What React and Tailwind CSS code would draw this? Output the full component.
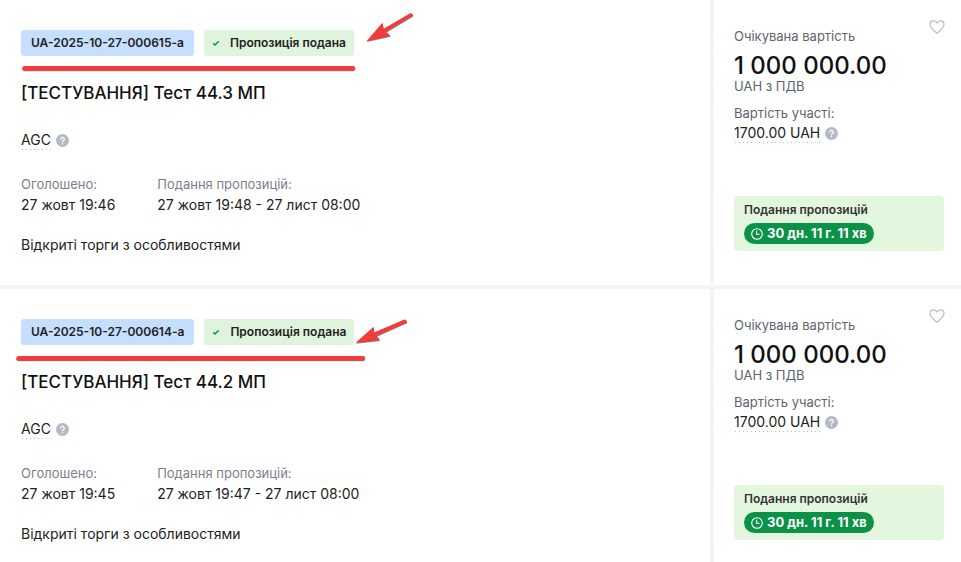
import { useState } from "react";

const tenders = [
  {
    id: "UA-2025-10-27-000615-a",
    title: "[ТЕСТУВАННЯ] Тест 44.3 МП",
    announced: "27 жовт 19:46",
    period: "27 жовт 19:48 - 27 лист 08:00",
    Mark: FirstMark,
  },
  {
    id: "UA-2025-10-27-000614-a",
    title: "[ТЕСТУВАННЯ] Тест 44.2 МП",
    announced: "27 жовт 19:45",
    period: "27 жовт 19:47 - 27 лист 08:00",
    Mark: SecondMark,
  },
];

// red pen notes drawn over the card
function FirstMark() {
  return (
    <svg className="absolute left-0 top-0 pointer-events-none" width="440" height="80" viewBox="0 0 440 80" fill="none" aria-hidden="true">
      <path d="M24.5 69.2H353" stroke="#8b7b7b" strokeWidth="4" strokeLinecap="round" />
      <path d="M24.5 68.2H353" stroke="#f43a3a" strokeWidth="4.4" strokeLinecap="round" />
      <g transform="translate(0.3 0.9)" fill="#8b7b7b">
        <path d="M366.5 41.2L382.4 22.8L383.6 28.8L410.2 13.2Q412.8 13 413 15.6L386 31.8L390.5 35.8Z" />
      </g>
      <path d="M366.5 41.2L382.4 22.8L383.6 28.8L410.2 13.2Q412.8 13 413 15.6L386 31.8L390.5 35.8Z" fill="#f43a3a" />
    </svg>
  );
}

function SecondMark() {
  return (
    <svg className="absolute left-0 top-0 pointer-events-none" width="440" height="80" viewBox="0 0 440 80" fill="none" aria-hidden="true">
      <path d="M18.5 70.2H363" stroke="#8b7b7b" strokeWidth="4" strokeLinecap="round" />
      <path d="M18.5 69.2H363" stroke="#f43a3a" strokeWidth="4.4" strokeLinecap="round" />
      <g transform="translate(0.3 0.9)" fill="#8b7b7b">
        <path d="M355.6 53.8L373.6 37.8L374 43.6L404.4 30.6Q407 30.8 406.8 33.4L376.6 46.8L380 51.2Z" />
      </g>
      <path d="M355.6 53.8L373.6 37.8L374 43.6L404.4 30.6Q407 30.8 406.8 33.4L376.6 46.8L380 51.2Z" fill="#f43a3a" />
    </svg>
  );
}

const HelpIcon = () => (
  <svg width="13" height="13" viewBox="0 0 13 13" fill="none" aria-hidden="true">
    <circle cx="6.5" cy="6.5" r="6.5" fill="#b4b9c6" />
    <path d="M4.8 5.2a1.75 1.75 0 1 1 2.6 1.5c-.6.35-.9.6-.9 1.2" stroke="#fff" strokeWidth="1.2" strokeLinecap="round" />
    <circle cx="6.5" cy="9.7" r="0.75" fill="#fff" />
  </svg>
);

const CheckIcon = () => (
  <svg width="8" height="8" viewBox="0 0 8 8" fill="none" aria-hidden="true">
    <path d="M1.2 4.4L3 6L6.8 2.2" stroke="#12964b" strokeWidth="1.6" />
  </svg>
);

const ClockIcon = () => (
  <svg width="12" height="12" viewBox="0 0 12 12" fill="none" stroke="#fff" aria-hidden="true">
    <circle cx="6" cy="6" r="5.3" strokeWidth="1.1" />
    <path d="M5.6 2.8V6.3H8.6" strokeWidth="1.1" />
  </svg>
);

// text with a sparse dotted underline and a help sign
const HintText = ({ children }) => (
  <div className="flex items-center gap-[5px]">
    <span className="bg-[linear-gradient(to_right,#b4b9c6_1px,transparent_1px)] bg-[length:4px_1px] bg-bottom bg-repeat-x leading-5">
      {children}
    </span>
    <HelpIcon />
  </div>
);

const FavoriteButton = () => {
  const [active, setActive] = useState(false);

  return (
    <button
      type="button"
      aria-label="Додати в обране"
      aria-pressed={active}
      onClick={() => setActive(!active)}
      className="absolute right-4 top-5 cursor-pointer"
    >
      <svg width="16" height="14" viewBox="0 0 16 14" fill={active ? "#b9bcc6" : "none"} stroke="#b9bcc6" strokeWidth="1.2" strokeLinejoin="round">
        <path d="M8 13.2C5.2 11 1 8 1 4.6C1 2.4 2.6 0.9 4.5 0.9C6 0.9 7.3 1.7 8 3.1C8.7 1.7 10 0.9 11.5 0.9C13.4 0.9 15 2.4 15 4.6C15 8 10.8 11 8 13.2Z" />
      </svg>
    </button>
  );
};

const TenderCard = ({ tender }) => {
  const { id, title, announced, period, Mark } = tender;

  return (
    <article className="flex shrink-0 gap-1">
      <div className="relative flex-1 min-w-0 bg-white pt-[30px] pr-5 pb-[29px] pl-[21px]">
        <div className="flex gap-[10px] text-xs font-semibold leading-[26px]">
          <span className="rounded-[3px] bg-[#c6dfff] px-[10px]">{id}</span>
          <span className="flex items-center gap-[10px] rounded-[3px] bg-[#dff4dc] px-2">
            <CheckIcon />
            Пропозиція подана
          </span>
        </div>

        <h2 className="my-[25px] text-[17px] font-medium leading-6 text-[#111]">{title}</h2>

        <HintText>AGC</HintText>

        <dl className="mt-6 flex gap-[42px]">
          <div>
            <dt className="text-[13px] leading-5 text-[#7b7f8c]">Оголошено:</dt>
            <dd className="leading-[22px]">{announced}</dd>
          </div>
          <div>
            <dt className="text-[13px] leading-5 text-[#7b7f8c]">Подання пропозицій:</dt>
            <dd className="leading-[22px]">{period}</dd>
          </div>
        </dl>

        <p className="mt-[18px] leading-[22px]">Відкриті торги з особливостями</p>
        <Mark />
      </div>

      <aside className="relative flex w-[247px] shrink-0 flex-col bg-white pl-5 pr-[17px] pt-[26px] pb-[34px]">
        <FavoriteButton />
        <p className="text-[13px] leading-5 text-[#5f6470]">Очікувана вартість</p>
        <p className="mt-2 text-2xl font-medium leading-6 text-[#111]">1 000 000.00</p>
        <p className="text-[13px] leading-4 text-[#5f6470]">UAH з ПДВ</p>
        <p className="mt-[9px] text-[13px] leading-5 text-[#5f6470]">Вартість участі:</p>
        <HintText>1700.00 UAH</HintText>

        <div className="mt-auto rounded bg-[#e2f7de] px-[10px] pt-[6px] pb-[7px]">
          <p className="text-xs font-semibold leading-4 text-[#333]">Подання пропозицій</p>
          <p className="mt-[5px] flex h-[21px] w-fit items-center gap-1 rounded-full bg-[#0b9246] px-[7px] text-[13px] font-bold text-white">
            <ClockIcon />
            30 дн. 11 г. 11 хв
          </p>
        </div>
      </aside>
    </article>
  );
};

const App = () => {
  return (
    <main className="flex h-screen flex-col gap-1 overflow-hidden bg-[#f3f4f6] font-['Inter',sans-serif] text-sm text-[#222]">
      {tenders.map((tender) => (
        <TenderCard key={tender.id} tender={tender} />
      ))}
    </main>
  );
};

export default App;
